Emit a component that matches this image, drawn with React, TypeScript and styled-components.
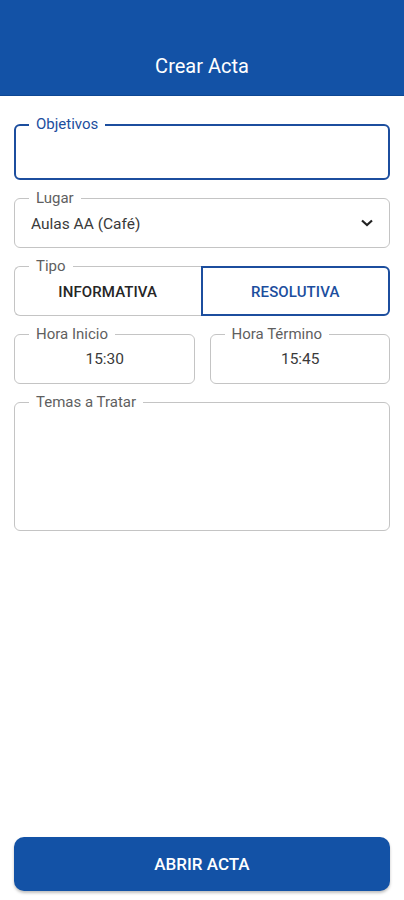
import React, {useState} from 'react';
import styled, {createGlobalStyle} from 'styled-components';

const BLUE = '#1352a6';
const FOCUS = '#1c4e9e';
const GRAY = '#c4c4c4';

const GlobalStyle = createGlobalStyle`
    html, body {
        margin: 0;
        padding: 0;
        background: #fff;
        font-family: Roboto, "Noto Sans", Arial, sans-serif;
    }
`;

const Screen = styled.div`
    width: 404px;
    height: 900px;
    display: flex;
    flex-direction: column;
    background: #fff;
`;

const Header = styled.div`
    height: 96px;
    background: ${BLUE};
    border-bottom: 1px solid #0d4793;
    box-sizing: border-box;
    display: flex;
    align-items: flex-end;
    justify-content: center;
    padding-bottom: 17px;
    color: #fff;
    font-size: 20px;
    font-weight: 400;
`;

const Form = styled.div`
    flex: 1;
    display: flex;
    flex-direction: column;
    gap: 10px;
    padding: 20px 14px 0;
`;

const Row = styled.div`
    display: flex;
    gap: 15px;
`;

const Field = styled.div<{$flex?: boolean}>`
    position: relative;
    padding-top: 8px;
    ${(p) => (p.$flex ? 'flex: 1;' : '')}
`;

const Box = styled.div<{$focused?: boolean; $height: number}>`
    box-sizing: border-box;
    height: ${(p) => p.$height}px;
    border: ${(p) => (p.$focused ? `2px solid ${FOCUS}` : `1px solid ${GRAY}`)};
    border-radius: 6px;
    display: flex;
    align-items: center;
    padding: 0 15px 0 16px;
    color: #333;
    font-size: 15.5px;
`;

const Label = styled.span<{$focused?: boolean}>`
    position: absolute;
    top: 0;
    left: 15px;
    padding: 0 7px;
    background: #fff;
    line-height: 16px;
    font-size: 15px;
    color: ${(p) => (p.$focused ? FOCUS : '#5f5f5f')};
`;

const Value = styled.span<{$center?: boolean}>`
    flex: 1;
    text-align: ${(p) => (p.$center ? 'center' : 'left')};
    padding-top: ${(p) => (p.$center ? '0' : '2px')};
    color: #3a3a3a;
`;

const Segments = styled.div`
    display: flex;
    height: 50px;
`;

const Segment = styled.div<{$active?: boolean}>`
    flex: 1;
    box-sizing: border-box;
    display: flex;
    align-items: center;
    justify-content: center;
    padding-top: 2px;
    font-size: 15px;
    font-weight: 500;
    letter-spacing: 0.1px;
    color: ${(p) => (p.$active ? FOCUS : '#262626')};
    border: ${(p) => (p.$active ? `2px solid ${FOCUS}` : `1px solid ${GRAY}`)};
    border-right: ${(p) => (p.$active ? `2px solid ${FOCUS}` : 'none')};
    border-radius: ${(p) => (p.$active ? '0 6px 6px 0' : '6px 0 0 6px')};
`;

const Footer = styled.div`
    padding: 0 14px 9px;
`;

const Button = styled.button`
    width: 100%;
    height: 54px;
    border: none;
    border-radius: 10px;
    background: ${BLUE};
    color: #fff;
    font-family: inherit;
    font-size: 17px;
    font-weight: 500;
    box-shadow: 0 2px 3px rgba(0, 0, 0, 0.25);
`;

const Chevron = () => (
    <svg width="14" height="10" viewBox="0 0 14 10">
        <polyline points="2,2.5 7,7 12,2.5" fill="none" stroke="#222" strokeWidth="2.2"/>
    </svg>
);

const App = () => {
    const [tipo, setTipo] = useState('RESOLUTIVA');
    return (
        <Screen>
            <GlobalStyle/>
            <Header>Crear Acta</Header>
            <Form>
                <Field>
                    <Box $focused $height={56}/>
                    <Label $focused>Objetivos</Label>
                </Field>
                <Field>
                    <Box $height={50}>
                        <Value>Aulas AA (Café)</Value>
                        <Chevron/>
                    </Box>
                    <Label>Lugar</Label>
                </Field>
                <Field>
                    <Segments>
                        {['INFORMATIVA', 'RESOLUTIVA'].map((t) => (
                            <Segment key={t} $active={tipo === t} onClick={() => setTipo(t)}>
                                {t}
                            </Segment>
                        ))}
                    </Segments>
                    <Label>Tipo</Label>
                </Field>
                <Row>
                    <Field $flex>
                        <Box $height={50}>
                            <Value $center>15:30</Value>
                        </Box>
                        <Label>Hora Inicio</Label>
                    </Field>
                    <Field $flex>
                        <Box $height={50}>
                            <Value $center>15:45</Value>
                        </Box>
                        <Label>Hora Término</Label>
                    </Field>
                </Row>
                <Field>
                    <Box $height={129}/>
                    <Label>Temas a Tratar</Label>
                </Field>
            </Form>
            <Footer>
                <Button>ABRIR ACTA</Button>
            </Footer>
        </Screen>
    );
};

export default App;
